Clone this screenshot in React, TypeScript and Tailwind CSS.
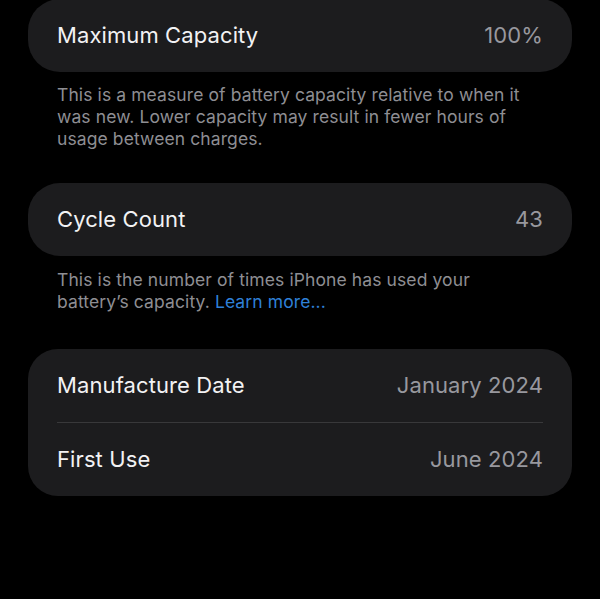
import React from "react";

const font = { fontFamily: "Inter, 'Noto Sans', sans-serif" };

function Row({ label, value }: { label: string; value: string }) {
  return (
    <div className="flex h-[73px] items-center justify-between">
      <span className="text-[22px] text-[#f2f2f4] tracking-[0.1px]">{label}</span>
      <span className="text-[22px] text-[#98989e] tracking-[0.1px]">{value}</span>
    </div>
  );
}

export default function App() {
  return (
    <div className="min-h-[600px] w-[600px] bg-black" style={font}>
      <div className="px-[28px]">
        <div className="mt-[-1px] rounded-[32px] bg-[#1c1c1e] px-[29px]">
          <Row label="Maximum Capacity" value="100%" />
        </div>
        <p className="mt-[12px] pl-[29px] pr-[32px] text-[17.5px] leading-[22px] text-[#8e8e93] tracking-[0.1px]">
          This is a measure of battery capacity relative to when it was new. Lower capacity may result in fewer hours of usage between charges.
        </p>
        <div className="mt-[33px] rounded-[32px] bg-[#1c1c1e] px-[29px]">
          <Row label="Cycle Count" value="43" />
        </div>
        <p className="mt-[13px] pl-[29px] pr-[32px] text-[17.5px] leading-[22px] text-[#8e8e93] tracking-[0.1px]">
          This is the number of times iPhone has used your battery’s capacity.{" "}
          <span className="text-[#2f80d8]">Learn more...</span>
        </p>
        <div className="mt-[36px] rounded-[30px] bg-[#1c1c1e] px-[29px]">
          <Row label="Manufacture Date" value="January 2024" />
          <div className="h-px bg-[#38383a]" />
          <Row label="First Use" value="June 2024" />
        </div>
      </div>
    </div>
  );
}
